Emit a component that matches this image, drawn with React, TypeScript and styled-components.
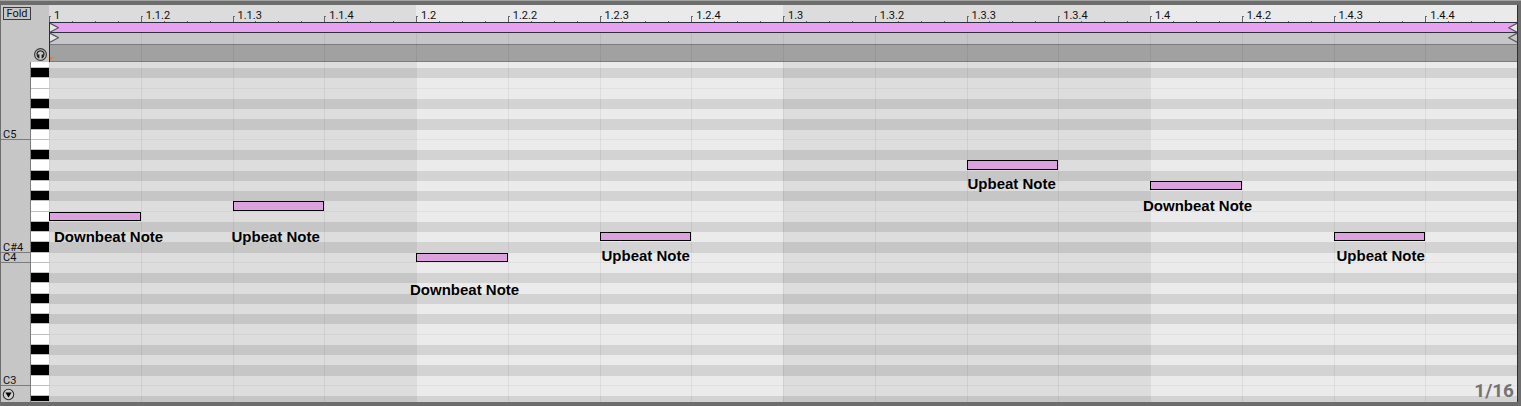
import React from "react";
import styled, { createGlobalStyle } from "styled-components";

const GlobalStyle = createGlobalStyle`
  * { box-sizing: border-box; }
  body { margin: 0; background: #6c6d6c; }
  button { font: inherit; color: inherit; padding: 0; margin: 0; border: 0; background: none; }
`;

/* The roll shows 34 lanes; the first and the last are cut by the edges. */
const LANES = "minmax(0, 24fr) repeat(32, minmax(0, 41fr)) minmax(0, 24fr)";
const TOP_PITCH = 79;
const BOTTOM_PITCH = 46;
const STEPS = 16;
const NAMES = ["C", "C#", "D", "D#", "E", "F", "F#", "G", "G#", "A", "A#", "B"];

const pitches = Array.from({ length: TOP_PITCH - BOTTOM_PITCH + 1 }, (_, i) => TOP_PITCH - i);
const isBlack = (pitch: number) => NAMES[pitch % 12].endsWith("#");
const pitchName = (pitch: number) => `${NAMES[pitch % 12]}${Math.floor(pitch / 12) - 1}`;
const LABELLED = [72, 61, 60, 48];

const steps = Array.from({ length: STEPS }, (_, i) => {
  const beat = Math.floor(i / 4) + 1;
  const sub = (i % 4) + 1;
  const label = i === 0 ? "1" : sub === 1 ? `1.${beat}` : `1.${beat}.${sub}`;
  return { label, bright: beat % 2 === 0 };
});

interface NoteData {
  step: number;
  pitch: number;
  text: string;
  dx: number;
  dy: number;
}

const notes: NoteData[] = [
  { step: 0, pitch: 64, text: "Downbeat Note", dx: 4, dy: 16 },
  { step: 2, pitch: 65, text: "Upbeat Note", dx: -2, dy: 27 },
  { step: 4, pitch: 60, text: "Downbeat Note", dx: -7, dy: 28 },
  { step: 6, pitch: 62, text: "Upbeat Note", dx: 1, dy: 15 },
  { step: 10, pitch: 69, text: "Upbeat Note", dx: 0, dy: 15 },
  { step: 12, pitch: 67, text: "Downbeat Note", dx: -8, dy: 16 },
  { step: 14, pitch: 62, text: "Upbeat Note", dx: 2, dy: 15 },
];

const Editor = styled.main`
  display: flex;
  flex-direction: column;
  min-height: 100vh;
  border-top: 1px solid #a3a5a3;
  background: #6c6d6c;
  padding: 4px 3px 4px 1px;
  font-family: Roboto, "Liberation Sans", sans-serif;
  font-size: 11px;
  line-height: 12px;
  color: #111;
`;

const Header = styled.header`
  display: grid;
  grid-template-columns: 48px minmax(0, 1fr);
  height: 57px;
`;

const Corner = styled.div`
  display: flex;
  flex-direction: column;
  justify-content: space-between;
  align-items: flex-start;
  padding: 2px 2px 1px;
  background: #c6c6c6;
`;

const FoldButton = styled.button`
  width: 28px;
  height: 13px;
  border: 1px solid #3c3c3c;
  line-height: 11px;
`;

const PreviewButton = styled.button`
  align-self: flex-end;
  width: 13px;
  height: 13px;
  svg { display: block; }
`;

const Timeline = styled.div`
  display: flex;
  flex-direction: column;
  border-right: 1px solid #2d2f40;
`;

const StepRow = styled.div`
  display: grid;
  grid-template-columns: repeat(${STEPS}, minmax(0, 1fr));
`;

const Ruler = styled(StepRow)`
  height: 17px;
`;

const RulerStep = styled.div<{ $bright: boolean }>`
  display: grid;
  grid-template-columns: repeat(4, minmax(0, 1fr));
  align-items: end;
  position: relative;
  background: ${(p) => (p.$bright ? "#eaeaea" : "#dcdcdc")};
`;

const Tick = styled.i<{ $major?: boolean }>`
  height: ${(p) => (p.$major ? 6 : 1)}px;
  border-left: 1px solid #666;
  ${(p) =>
    p.$major &&
    `background: linear-gradient(#777, #777) 0 0 / 1px 1px no-repeat;`}
`;

const StepLabel = styled.span`
  position: absolute;
  left: 5px;
  bottom: 0;
`;

const Strip = styled.div`
  display: flex;
  justify-content: space-between;
  svg { display: block; }
`;

const LoopStrip = styled(Strip)`
  height: 11px;
  border: solid #2d2f40;
  border-width: 1px 0 1px 1px;
  background: #e6a2ee;
`;

const LowerStrips = styled.div`
  position: relative;
  border-left: 1px solid #2d2f40;
`;

const MarkerStrip = styled(Strip)`
  height: 12px;
  border-bottom: 1px solid #7c7c7c;
  background: #c6c6c6;
`;

const ScrubStrip = styled(Strip)`
  height: 17px;
  align-items: flex-end;
  border-bottom: 1px solid #7c7c7c;
  background: #a1a1a1;
`;

const Guides = styled(StepRow)<{ $overBorder?: boolean }>`
  position: absolute;
  inset: 0;
  left: ${(p) => (p.$overBorder ? "-1px" : "0")};
  pointer-events: none;
`;

const Guide = styled.i`
  border-left: 1px solid rgba(0, 0, 0, 0.06);
`;

const Body = styled.section`
  flex: 1;
  display: grid;
  grid-template-columns: 29px 19px minmax(0, 1fr);
  min-height: 340px;
`;

const LaneGrid = styled.div`
  display: grid;
  grid-template-rows: ${LANES};
  min-height: 0;
`;

const Names = styled(LaneGrid)`
  position: relative;
  background: #c6c6c6;
`;

const PitchLabel = styled.div<{ $row: number }>`
  grid-row: ${(p) => p.$row};
  display: flex;
  align-items: flex-end;
  min-height: 0;
  padding-left: 2px;
  border-bottom: 1px solid #7c7c7c;
  line-height: 8px;
`;

const ScrollButton = styled.button`
  position: absolute;
  left: 1px;
  bottom: 1px;
  width: 13px;
  height: 13px;
  svg { display: block; }
`;

const Keyboard = styled(LaneGrid)`
  border-left: 1px solid #7c7c7c;
  background: #fff;
`;

const Key = styled.button<{ $black: boolean }>`
  min-height: 0;
  border-bottom: 1px solid #c0c0c0;
  background: ${(p) => (p.$black ? "#000" : "#fff")};
`;

const Canvas = styled.div`
  position: relative;
  display: grid;
  grid-template-rows: minmax(0, 1fr);
  border-right: 1px solid #2d2f40;
`;

const Beats = styled.div`
  grid-area: 1 / 1;
  display: grid;
  grid-template-columns: repeat(4, minmax(0, 1fr));
`;

const Beat = styled.i<{ $bright: boolean }>`
  background: ${(p) => (p.$bright ? "#ebebeb" : "#dddddd")};
`;

const Lanes = styled(LaneGrid)`
  grid-area: 1 / 1;
  z-index: 1;
`;

const Lane = styled.i<{ $black: boolean; $line: boolean }>`
  background: ${(p) => (p.$black ? "rgba(0, 0, 0, 0.1)" : "transparent")};
  border-bottom: ${(p) => (p.$line ? "1px solid rgba(0, 0, 0, 0.04)" : "0")};
`;

const Notes = styled(LaneGrid)`
  grid-area: 1 / 1;
  z-index: 3;
  grid-template-columns: repeat(${STEPS}, minmax(0, 1fr));
`;

const Note = styled.div<{ $row: number; $column: number }>`
  grid-row: ${(p) => p.$row};
  grid-column: ${(p) => p.$column};
  position: relative;
  margin-bottom: 1px;
  border: 1px solid #000;
  background: #dba2de;
`;

const NoteLabel = styled.span<{ $dx: number; $dy: number }>`
  position: absolute;
  left: ${(p) => p.$dx}px;
  top: ${(p) => p.$dy}px;
  font: bold 15px/16px "Liberation Sans", Arial, sans-serif;
  color: #000;
  white-space: nowrap;
`;

const GridSize = styled.output`
  position: absolute;
  right: 3px;
  bottom: 1px;
  z-index: 4;
  font-size: 19px;
  line-height: 20px;
  font-weight: 700;
  color: #737373;
`;

const StartMarker = () => (
  <svg width="9" height="10" viewBox="0 0 9 10" aria-hidden="true">
    <path d="M0 0.2L8.5 4.7L0 9.2" fill="#e6e6e6" stroke="#55565f" strokeWidth="1.2" />
  </svg>
);

const EndMarker = ({ fill }: { fill: string }) => (
  <svg width="9" height="10" viewBox="0 0 9 10" aria-hidden="true">
    <path d="M9 0.2L0.7 4.7L9 9.2" fill={fill} stroke="#55565f" strokeWidth="1.2" />
  </svg>
);

export default function App() {
  return (
    <>
      <GlobalStyle />
      <Editor>
        <Header>
          <Corner>
            <FoldButton type="button">Fold</FoldButton>
            <PreviewButton type="button" aria-label="Preview">
              <svg width="13" height="13" viewBox="0 0 13 13" fill="none" aria-hidden="true">
                <circle cx="6.5" cy="6.5" r="5.9" stroke="#3a3a3a" strokeWidth="1.2" />
                <path d="M3.3 7.5C2.4 4.8 4 2.8 6.5 2.8S10.6 4.8 9.7 7.5" stroke="#222" strokeWidth="1.3" />
                <path d="M3.2 6.5H5.4V10.2H4.2L2.9 8.4ZM9.8 6.5H7.6V10.2H8.8L10.1 8.4Z" fill="#222" />
              </svg>
            </PreviewButton>
          </Corner>
          <Timeline>
            <Ruler>
              {steps.map((s) => (
                <RulerStep key={s.label} $bright={s.bright}>
                  <Tick $major />
                  <Tick />
                  <Tick />
                  <Tick />
                  <StepLabel>{s.label}</StepLabel>
                </RulerStep>
              ))}
            </Ruler>
            <LoopStrip>
              <StartMarker />
              <EndMarker fill="#e6e6e6" />
            </LoopStrip>
            <LowerStrips>
              <MarkerStrip>
                <StartMarker />
                <EndMarker fill="#c6c6c6" />
              </MarkerStrip>
              <ScrubStrip>
                <svg width="4" height="4" viewBox="0 0 4 4" aria-hidden="true">
                  <path d="M0 0H4L0 3.5Z" fill="#ff7416" />
                </svg>
              </ScrubStrip>
              <Guides $overBorder>
                {steps.map((s) => (
                  <Guide key={s.label} />
                ))}
              </Guides>
            </LowerStrips>
          </Timeline>
        </Header>
        <Body>
          <Names>
            {LABELLED.map((pitch) => (
              <PitchLabel key={pitch} $row={TOP_PITCH - pitch + 1}>
                {pitchName(pitch)}
              </PitchLabel>
            ))}
            <ScrollButton type="button" aria-label="Scroll down">
              <svg width="13" height="13" viewBox="0 0 13 13" aria-hidden="true">
                <circle cx="6.5" cy="6.5" r="5.2" fill="#cfcfcf" stroke="#333" strokeWidth="1.1" />
                <path d="M3.4 4.4H9.6L6.5 9.6Z" fill="#000" />
              </svg>
            </ScrollButton>
          </Names>
          <Keyboard>
            {pitches.map((pitch) => (
              <Key key={pitch} type="button" aria-label={pitchName(pitch)} $black={isBlack(pitch)} />
            ))}
          </Keyboard>
          <Canvas>
            <Beats>
              {[1, 2, 3, 4].map((beat) => (
                <Beat key={beat} $bright={beat % 2 === 0} />
              ))}
            </Beats>
            <Lanes>
              {pitches.map((pitch) => (
                <Lane
                  key={pitch}
                  $black={isBlack(pitch)}
                  $line={pitch % 12 === 0 || pitch % 12 === 5}
                />
              ))}
            </Lanes>
            <Guides>
              {steps.map((s) => (
                <Guide key={s.label} />
              ))}
            </Guides>
            <Notes>
              {notes.map((n) => (
                <Note key={n.step} $row={TOP_PITCH - n.pitch + 1} $column={n.step + 1}>
                  <NoteLabel $dx={n.dx} $dy={n.dy}>
                    {n.text}
                  </NoteLabel>
                </Note>
              ))}
            </Notes>
            <GridSize>1/16</GridSize>
          </Canvas>
        </Body>
      </Editor>
    </>
  );
}
